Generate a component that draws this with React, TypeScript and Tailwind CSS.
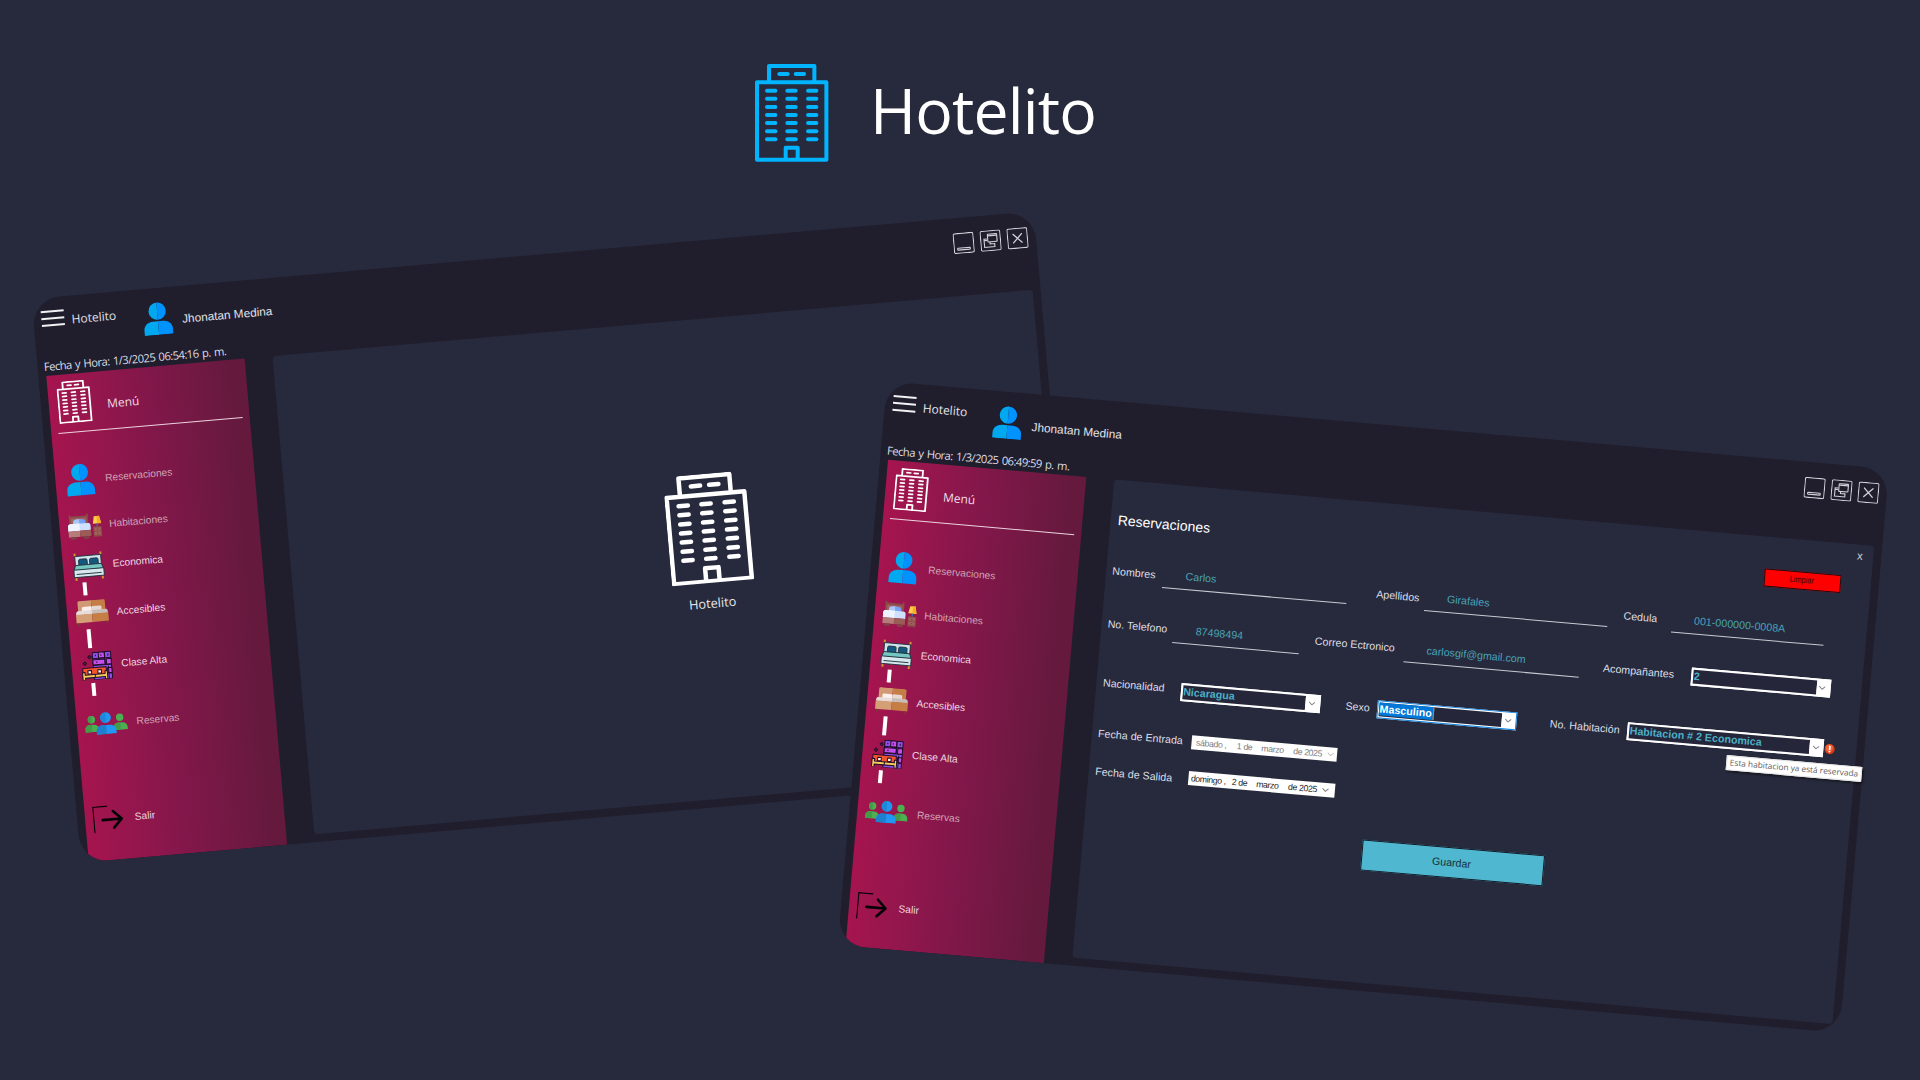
import React from "react";

const SANS = "font-['Liberation_Sans',sans-serif]";
const HUMANIST = "font-['Open_Sans',sans-serif]";

function Building({ className, color = "#fff" }: { className: string; color?: string }) {
  const rows = [80, 104, 129, 153, 177, 202, 226];
  const cols = [36, 97, 159];
  return (
    <svg className={className} viewBox="0 0 220 293" preserveAspectRatio="none" fill="none" stroke={color} strokeWidth="12" strokeLinejoin="round">
      <path d="M42 53V6h136v47M6 55h208v232H6zM92 287v-36h36v36" />
      <path strokeLinecap="round" d="M73 30h25M122 30h25" />
      {rows.map((y) => cols.map((x) => <path key={`${x}-${y}`} strokeLinecap="round" d={`M${x} ${y}h25`} />))}
    </svg>
  );
}

function Person({ className }: { className: string }) {
  return (
    <svg className={className} viewBox="0 0 30 34">
      <path fill="#00a8f0" d="M15 0.5a8.8 8.8 0 0 0 0 17.6zM15 19.6h-5C4.500 19.600 0.500 23 0.500 28v5.400H15z" />
      <path fill="#0092ff" d="M15 0.500a8.800 8.800 0 0 1 0 17.600zM15 19.600h5c5.500 0 9.500 3.400 9.500 8.400v5.400H15z" />
    </svg>
  );
}

function BedroomIcon() {
  return (
    <svg className="h-[26.3px] w-[41.3px] shrink-0" viewBox="0 0 41.3 26.3">
      <path fill="#8b4c4c" d="M2 1h1.600v1.500h15.800V0.800H21V15H2z" />
      <path fill="#a4625c" d="M4 4.500h15v8H4z" />
      <path fill="#78a2f4" d="M6 11V8.500C6 6.300 8 5.500 12 5.500s6.200 0.800 6.200 3V11z" />
      <path fill="#a9c6fb" d="M6 11V8.500C6 6.300 8 5.500 12 5.500V11z" />
      <path fill="#cfe0fc" d="M0.500 12.500c0-2 1.200-2.500 3-2.500H20c1.800 0 3 .5 3 2.500v4.700H0.500z" />
      <path fill="#eef4ff" d="M0.500 12.500c0-2 1.200-2.500 3-2.500H12v7.200H0.500z" />
      <path fill="#b47d79" d="M0.500 17.200H12v6H0.500z" />
      <path fill="#9a5c56" d="M12 17.200h11v6H12z" />
      <path fill="#7d4544" d="M2.500 23.200H8v2.500H2.500zM15.500 23.200H21v2.500h-5.500z" />
      <path fill="#ffcd4b" d="M27 4h5.300l1.500 7.300h-8.300z" />
      <path fill="#f6ac26" d="M29.700 4h2.600l1.500 7.300h-4.100z" />
      <path fill="#2f6fae" d="M29 11.300h1.400v3H29z" />
      <path fill="#8b4c4c" d="M25.500 14.200h8.300v10.300h-8.300z" />
      <path fill="#a4625c" d="M26.500 15.500h6.300v3h-6.300zM26.500 19.600h6.300v3h-6.300z" />
      <path fill="#6e3b3c" d="M28.900 16.600h1.500v.8h-1.500zM28.900 20.700h1.500v.8h-1.500z" />
    </svg>
  );
}

function DoubleBedIcon() {
  return (
    <svg className="h-[28px] w-[41.3px] shrink-0" viewBox="0 0 41.3 28" stroke="#20303c" strokeWidth="0.9" strokeLinejoin="round">
      <path fill="#cfe3ea" d="M4.500 3.500h26v13h-26z" />
      <path fill="#14587f" d="M8 8.200c0-1 .5-1.600 1.500-1.600H15c1 0 1.500.6 1.500 1.600v4.600H8zM19 8.200c0-1 .5-1.600 1.500-1.600H26c1 0 1.500.6 1.500 1.600v4.600H19z" />
      <path fill="#74c6c2" d="M4.500 12.500h26l1.800 5H2.700z" />
      <path fill="#d7e7ee" d="M2.500 17h30v7.500h-30z" />
      <path fill="none" d="M5 21.500h25" />
      <path fill="#c99a3c" stroke="none" d="M3.600 0.500h1.900v2.600H3.600zM29.500 0.500h1.900v2.600h-1.900zM3.400 25h2v2.800h-2zM29.800 25h2v2.800h-2z" />
    </svg>
  );
}

function WoodBedIcon() {
  return (
    <svg className="h-[25px] w-[41.3px] shrink-0" viewBox="0 0 41.3 25">
      <path fill="#d19a74" d="M3.200 2c0-1.200.6-1.700 1.700-1.700h12V14H3.200z" />
      <path fill="#c67e47" d="M16.900 0.300h12c1.100 0 1.700.5 1.700 1.700v12H16.900z" />
      <path fill="#fbf0ee" d="M7 7.800c0-1 .6-1.500 1.600-1.500h7.300c.7 0 1 .5 1 1.300V11H7z" />
      <path fill="#e8d8d3" d="M16.900 7.600c0-.8.400-1.300 1-1.300h7.300c1 0 1.600.5 1.600 1.500V11h-9.900z" />
      <path fill="#e6dcda" d="M1 12.500c.3-1.700 1-2.300 2.200-2.300h13.700v4H1z" />
      <path fill="#c9bdb9" d="M16.900 10.200h13.700c1.200 0 2 .6 2.200 2.300v1.700H16.900z" />
      <path fill="#d59f76" d="M0.700 13.800h16.200v8.400H0.700z" />
      <path fill="#c67e47" d="M16.900 13.800h16.200v8.400H16.900z" />
      <path fill="#75402c" d="M1.700 22.200h1.700V25H1.700zM30.400 22.200h1.700V25h-1.700z" />
    </svg>
  );
}

function LoungeIcon() {
  return (
    <svg className="h-[28.5px] w-[41.3px] shrink-0" viewBox="0 0 41.3 28.5" stroke="#210d2a" strokeWidth="1" strokeLinejoin="round">
      <path fill="#8f50e8" d="M13.500 0.700h18.300v27.300H13.500z" />
      <path fill="#c44fea" d="M19.500 0.700h6v6h-6zM13.500 8h12v5h-12zM27 8h4.800v5.500H27zM27.500 17h4.300v5h-4.300z" />
      <path fill="none" d="M13.500 6.900h18.300M13.500 13.600h18.300M25.700 0.700v13M28.500 15v13M29 3v2M16.500 3v1.500M22 3v1.500M16.500 10.500h1.500M29 22.500h3" />
      <path fill="#5b2b42" d="M10.500 3.200l1.700 1.700-1.700 1.700-1.700-1.700zM5.300 9.300L7 11l-1.700 1.700L3.600 11z" />
      <path fill="#f0542f" d="M2.700 15.800h23.500v9.500H2.700z" />
      <path fill="#fff3dd" d="M7.700 18.300h3.600v3.300H7.700zM17.600 18.300h3.600v3.300h-3.600z" />
      <path fill="#f4c95c" d="M2.200 19.800h2.500v2.700h20V19.800H27v8h-2.300v-2.300h-20v2.300H2.200z" />
      <path fill="none" d="M14.700 22.500v3" />
    </svg>
  );
}

function PeopleIcon() {
  return (
    <svg className="h-[22.400px] w-[51.400px] shrink-0" viewBox="0 0 51.4 22.4">
      <g fill="#4caf50">
        <circle cx="6.900" cy="6.400" r="3.700" />
        <circle cx="35.300" cy="6.400" r="3.700" />
        <path d="M0 18.800v-2.300c0-3 2.500-4.900 5-4.900h4c2.700 0 5 2 5 4.900v2.300zM28.500 18.800v-2.300c0-3 2.500-4.900 5-4.900h4c2.700 0 5 2 5 4.900v2.300z" />
      </g>
      <path fill="#439a47" d="M0 18.800v-2.300c0-3 2.500-4.900 5-4.900h2v7.200zM28.500 18.800v-2.300c0-3 2.500-4.900 5-4.900h2v7.200zM6.900 2.700a3.700 3.700 0 0 0 0 7.400z" />
      <circle cx="21.200" cy="5.500" r="5.400" fill="#2196f3" />
      <path fill="#1e88d8" d="M21.200 0.100a5.400 5.400 0 0 0 0 10.800z" />
      <path fill="#2196f3" d="M11.300 22.300v-3.500c0-3.300 2.700-5.800 6-5.800h7.800c3.300 0 6 2.500 6 5.800v3.500z" />
      <path fill="#1e7fce" d="M11.300 22.300v-3.500c0-3.300 2.700-5.800 6-5.800h3.900v9.300z" />
    </svg>
  );
}

function ExitIcon() {
  return (
    <svg className="h-[27.5px] w-[41.3px] shrink-0" viewBox="0 0 41.3 27.5" fill="none" stroke="#050205">
      <path strokeWidth="1.200" d="M0.600 27V0.900h14.500" />
      <path strokeWidth="2.600" strokeLinecap="round" strokeLinejoin="round" d="M9.500 14.400H28.300M20.300 6.300l8.300 8.100-8.300 8.500" />
    </svg>
  );
}

function MenuItem({ icon, label, dim = false, className = "" }: { icon: React.ReactNode; label: string; dim?: boolean; className?: string }) {
  return (
    <div className={`flex shrink-0 items-center pl-[8px] ${className}`}>
      {icon}
      <span className={`pt-[1.300px] text-[10.200px] leading-[12px] ${dim ? "text-[#cfa3b5]" : "text-[#efd6e0]"}`}>{label}</span>
    </div>
  );
}

function Link({ className }: { className: string }) {
  return <div className={`ml-[17.900px] w-[4px] shrink-0 bg-white ${className}`} />;
}

function Sidebar() {
  return (
    <aside className={`flex w-[199px] shrink-0 flex-col bg-linear-to-r from-[#a6144f] via-[#82174a] via-50% to-[#64193d] to-95% ${SANS}`}>
      <div className="flex h-[58.500px] shrink-0 pt-[7.300px] pl-[9.100px]">
        <Building className="h-[42.200px] w-[33.200px]" />
        <span className={`ml-[15.500px] pt-[17.500px] text-[12px] leading-[16px] text-[#efdbe4] ${HUMANIST}`}>Menú</span>
      </div>
      <div className="ml-[6.400px] h-px w-[185.700px] shrink-0 bg-[#ecd3de]" />
      <MenuItem className="mt-[31px] h-[32px]" dim label="Reservaciones" icon={<span className="w-[41.300px] shrink-0 pl-[2px]"><Person className="h-[32.500px] w-[29.500px]" /></span>} />
      <MenuItem className="mt-[17.300px] h-[26.300px]" dim label="Habitaciones" icon={<BedroomIcon />} />
      <MenuItem className="mt-[12.900px] h-[28px]" label="Economica" icon={<DoubleBedIcon />} />
      <Link className="mt-[2.500px] h-[12.300px]" />
      <MenuItem className="mt-[5.800px] h-[25px]" label="Accesibles" icon={<WoodBedIcon />} />
      <Link className="mt-[4.100px] h-[18.400px]" />
      <MenuItem className="mt-[3.700px] h-[28.500px]" label="Clase Alta" icon={<LoungeIcon />} />
      <Link className="mt-[2.900px] h-[13.500px]" />
      <MenuItem className="mt-[16.400px] h-[22.400px]" dim label="Reservas" icon={<PeopleIcon />} />
      <MenuItem className="mt-[70.500px] h-[27.500px]" label="Salir" icon={<ExitIcon />} />
    </aside>
  );
}

function WindowButtons() {
  return (
    <div className="mt-[15px] mr-[8.200px] ml-auto flex gap-[5.700px]">
      <svg className="size-[21px]" viewBox="0 0 21 21" fill="none" stroke="#d3d2da" strokeWidth="1.100">
        <rect x=".6" y=".6" width="19.800" height="19.800" rx="1.500" />
        <rect x="4" y="15.300" width="12.600" height="1.900" rx=".5" />
      </svg>
      <svg className="size-[21px]" viewBox="0 0 21 21" fill="none" stroke="#d3d2da" strokeWidth="1.100">
        <rect x=".6" y=".6" width="19.800" height="19.800" rx="1.500" />
        <rect x="7.700" y="4" width="9.300" height="7.700" rx=".6" />
        <path d="M8 5.500h8.700M6.800 8.500H4v8.300h10.300v-3.500M4 10h3M9.700 11.700v2h4.600" />
      </svg>
      <svg className="size-[21px]" viewBox="0 0 21 21" fill="none" stroke="#d3d2da" strokeWidth="1.100">
        <rect x=".6" y=".6" width="19.800" height="19.800" rx="1.500" />
        <path strokeWidth="1.300" strokeLinecap="round" d="M6.200 6.200l8.600 8.600M14.800 6.200l-8.600 8.600" />
      </svg>
    </div>
  );
}

function AppWindow({ className, time, children }: { className: string; time: string; children: React.ReactNode }) {
  return (
    <section className={`absolute h-[566px] w-[1006px] translate-x-[0.3px] ${className}`}>
      <div className="flex h-full flex-col overflow-hidden rounded-[28px] bg-[#201e2d]">
        <header className="flex h-[57px] shrink-0 items-start text-[#e2e1e8]">
          <div className="mt-[13px] ml-[8px] flex w-[22.600px] flex-col gap-[5px]">
            <i className="h-[2px] bg-[#f2f2f5]" />
            <i className="h-[2px] bg-[#f2f2f5]" />
            <i className="h-[2px] bg-[#f2f2f5]" />
          </div>
          <span className={`mt-[15.600px] ml-[7.500px] w-[70.700px] text-[12px] leading-[16px] ${HUMANIST}`}>Hotelito</span>
          <Person className="mt-[13.500px] h-[33.500px] w-[30px]" />
          <span className={`mt-[25.200px] ml-[9.500px] text-[11.800px] leading-[16px] ${SANS}`}>Jhonatan Medina</span>
          <WindowButtons />
        </header>
        <div className={`h-[20.800px] shrink-0 pt-[2.700px] pl-[6.300px] text-[11.300px] leading-[17px] tracking-[-0.570px] text-[#dddce4] [word-spacing:1px] ${HUMANIST}`}>
          Fecha y Hora: {time}
        </div>
        <div className="flex min-h-0 flex-1 pr-[7.700px] pl-[8.400px]">
          <Sidebar />
          <main className={`mb-[8.400px] ml-[27.200px] min-w-0 flex-1 rounded-[4px] bg-[#272a3c] ${SANS}`}>{children}</main>
        </div>
      </div>
    </section>
  );
}

function Label({ className, children }: { className: string; children: React.ReactNode }) {
  return <span className={`shrink-0 text-[10.700px] whitespace-nowrap text-[#dcdce4] ${className}`}>{children}</span>;
}

function Input({ className, children }: { className: string; children: React.ReactNode }) {
  return (
    <div className={`shrink-0 border-b border-[#c9cad3] pb-[2px] pl-[22.300px] text-[10.700px] leading-[21px] text-[#48a2b8] ${className}`}>
      {children}
    </div>
  );
}

function Chevron({ color = "#858585" }: { color?: string }) {
  return (
    <svg className="h-[4px] w-[7px]" viewBox="0 0 7 4" fill="none" stroke={color} strokeWidth="1">
      <path d="M.5.5l3 2.800 3-2.800" />
    </svg>
  );
}

function Combo({ className, focused = false, children }: { className: string; focused?: boolean; children: React.ReactNode }) {
  return (
    <div className={`flex h-[18px] shrink-0 border bg-white p-px ${focused ? "border-[#1583dc]" : "border-white"} ${className}`}>
      <div className="flex min-w-0 flex-1 items-start bg-[#25263a] text-[10.700px] leading-[13.500px] font-bold whitespace-nowrap text-[#4bb0c6]">{children}</div>
      <div className="flex w-[12.500px] items-center justify-center bg-white"><Chevron /></div>
    </div>
  );
}

function DateBox({ className, day, num, color, chevron }: { className: string; day: string; num: string; color: string; chevron: string }) {
  return (
    <div className={`flex h-[14.200px] shrink-0 items-center bg-white text-[8.800px] leading-[14px] tracking-[-0.400px] whitespace-nowrap ${color} ${className}`}>
      <span className="w-[41px]">{day}</span>
      <span className="w-[24.500px]">{num} de</span>
      <span className="w-[32px]">marzo</span>
      <span className="w-[34px]">de 2025</span>
      <Chevron color={chevron} />
    </div>
  );
}

function ReservationForm() {
  return (
    <div className="flex flex-col">
      <div className="h-[31.900px] pt-[3.600px] pr-[10.800px] text-right text-[11.500px] leading-[16px] text-[#c9cad2]">x</div>
      <div className="flex h-[18.600px] items-start justify-between pr-[30.600px] pl-[7.600px]">
        <h1 className="text-[14px] leading-[16px] text-white">Reservaciones</h1>
        <button className="flex h-[18.600px] w-[77px] items-center justify-center border border-[#1c0a12] bg-[#ff0000] text-[9px] text-[#3a0306]">
          <span className="scale-x-[.82]">Limpiar</span>
        </button>
      </div>

      <div className="mt-[29.800px] flex h-[24px] items-start pl-[6.600px] leading-[23px]">
        <Label className="w-[51.200px]">Nombres</Label>
        <Input className="w-[184.700px]">Carlos</Input>
        <Label className="ml-[29px] w-[48.600px]">Apellidos</Label>
        <Input className="w-[184.700px]">Girafales</Input>
        <Label className="ml-[15px] w-[48.400px]">Cedula</Label>
        <Input className="w-[153.500px]">001-000000-0008A</Input>
      </div>

      <div className="mt-[29.700px] flex h-[24px] items-start pl-[6.600px] leading-[23px]">
        <Label className="-mt-[.5px] w-[66px]">No. Telefono</Label>
        <Input className="w-[126.800px]">87498494</Input>
        <Label className="-mt-[1.300px] ml-[15px] w-[89.900px]">Correo Ectronico</Label>
        <Input className="-mt-[1.200px] w-[175.700px]">carlosgif@gmail.com</Input>
        <Label className="ml-[23.900px] w-[88.700px]">Acompañantes</Label>
        <Combo className="mt-[3.200px] w-[140px]"><span className="pl-[.5px]">2</span></Combo>
      </div>

      <div className="mt-[39px] flex h-[18px] items-start pl-[7px] leading-[18px]">
        <Label className="-mt-[3.100px] w-[78.200px]">Nacionalidad</Label>
        <Combo className="w-[139.800px]"><span className="pl-[.5px]">Nicaragua</span></Combo>
        <Label className="-mt-[.5px] ml-[25.600px] w-[32.300px]">Sexo</Label>
        <Combo focused className="w-[139.500px]">
          <span className="h-[13.500px] border-r border-[#e07a2a] bg-[#0078d7] pr-[1px] text-white">Masculino</span>
        </Combo>
        <Label className="-mt-[.5px] ml-[33.300px] w-[77.800px]">No. Habitación</Label>
        <Combo className="mt-[.6px] w-[197.400px]"><span className="pl-[.5px]">Habitacion # 2 Economica</span></Combo>
        <svg className="mt-[4.300px] ml-[1px] size-[10.500px] shrink-0" viewBox="0 0 10.500 10.500">
          <circle cx="5.250" cy="5.250" r="5.100" fill="#d63a12" />
          <circle cx="4.700" cy="4.400" r="3.700" fill="#f2643a" />
          <path stroke="#fff" strokeWidth="1.700" d="M5.250 2v4.200M5.250 7.200v1.500" />
        </svg>
      </div>

      <div className="mt-[32.800px] flex h-[14.200px] items-start pl-[6.600px] leading-[14px]">
        <Label className="-mt-[.8px] w-[93.800px]">Fecha de Entrada</Label>
        <DateBox className="w-[145.900px] pl-[4.500px]" day="sábado  ," num="1" color="text-[#7c7c7c]" chevron="#c4c4c4" />
      </div>
      <div className="mt-[22px] flex h-[14.200px] items-start pl-[7px] leading-[14px]">
        <Label className="mt-[1px] w-[93.400px]">Fecha de Salida</Label>
        <DateBox className="w-[147px] pl-[2.500px]" day="domingo ," num="2" color="text-[#1c1c1c]" chevron="#777" />
      </div>

      <button className="mt-[39px] ml-[279px] flex h-[31.500px] w-[183.700px] items-center justify-center border border-[#131521] bg-[#4fb7cf] pt-[1px] pr-[2px] text-[10.600px] text-[#12303c]">
        Guardar
      </button>
    </div>
  );
}

export default function App() {
  return (
    <div className="relative h-[1080px] w-[1920px] overflow-hidden bg-[#272a3c]">
      <div className="flex items-start pt-[64px] pl-[755.300px]">
        <Building className="h-[97.700px] w-[73.400px]" color="#00b4ff" />
        <h1 className={`ml-[41.200px] pt-[8px] text-[62.500px] leading-[76px] tracking-[-0.800px] text-white ${HUMANIST}`}>Hotelito</h1>
      </div>

      <AppWindow className="top-[254px] left-[54px] -rotate-5" time="1/3/2025 06:54:16 p. m.">
        <div className="flex flex-col items-center pt-[154.800px] pl-[76.500px]">
          <Building className="h-[109.800px] w-[82.500px]" />
          <span className={`mt-[10.500px] mr-[5.500px] text-[12.700px] leading-[18px] text-[#e6e6ec] ${HUMANIST}`}>Hotelito</span>
        </div>
      </AppWindow>

      <AppWindow className="top-[424px] left-[860px] rotate-5" time="1/3/2025 06:49:59 p. m.">
        <ReservationForm />
      </AppWindow>

      <div className={`absolute top-[761.200px] left-[1726px] flex h-[14.500px] w-[136px] rotate-5 items-center justify-center border border-[#e4e4e4] bg-white text-[8.300px] whitespace-nowrap text-[#5c5c5c] shadow-[2px_2px_2px_rgba(0,0,0,0.4)] ${HUMANIST}`}>
        Esta habitacion ya está reservada
      </div>
    </div>
  );
}
